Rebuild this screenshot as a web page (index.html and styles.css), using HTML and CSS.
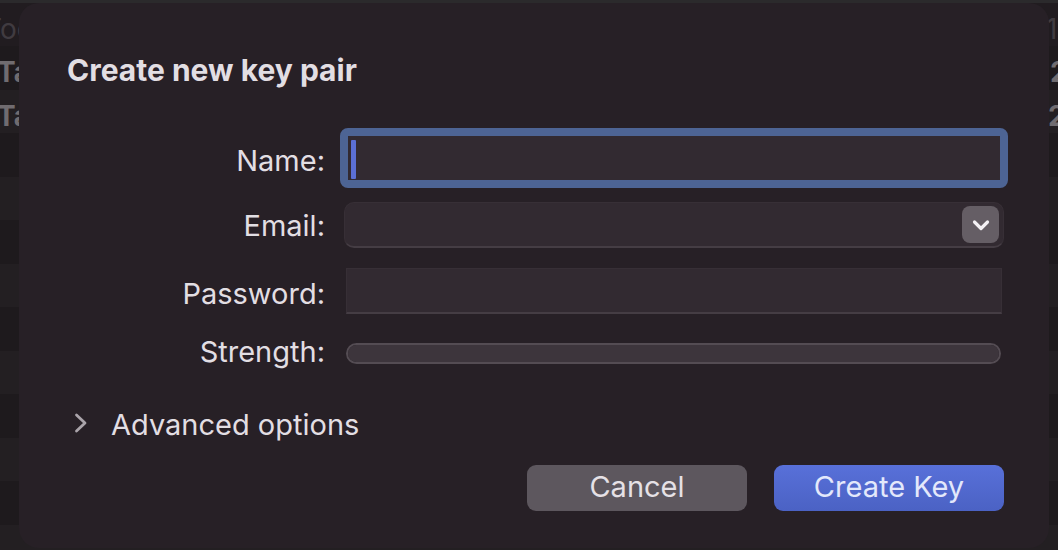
FILE: index.html
```html
<!DOCTYPE html>
<html lang="en">
<head>
<meta charset="utf-8">
<title>Create new key pair</title>
<link rel="stylesheet" href="styles.css">
</head>
<body>
<div class="key-list" aria-hidden="true">
  <div class="toolbar"></div>
  <div class="row heading"><span class="tool">Too</span><span class="date">10</span></div>
  <div class="row"><span class="kind">Ta</span><span class="date narrow">2</span></div>
  <div class="row"><span class="kind">Ta</span><span class="date">2</span></div>
  <div class="row"></div>
  <div class="row"></div>
  <div class="row"></div>
  <div class="row"></div>
  <div class="row"></div>
  <div class="row"></div>
  <div class="row"></div>
  <div class="row"></div>
  <div class="row"></div>
  <div class="row"></div>
</div>
<form class="sheet" role="dialog" aria-labelledby="title">
  <h1 class="title" id="title">Create new key pair</h1>
  <div class="fields">
    <label class="label low" for="name">Name:</label>
    <div class="control focused">
      <input class="input name" id="name" type="text">
      <span class="caret"></span>
    </div>
    <label class="label high" for="email">Email:</label>
    <div class="control combo">
      <input class="input email" id="email" type="text">
      <button class="drop" type="button" aria-label="Show email addresses">
        <svg width="18" height="12" viewBox="0 0 18 12" fill="none" stroke="currentColor" stroke-width="3.200" stroke-linecap="round" stroke-linejoin="round"><path d="M2.500 3 9 9.500l6.500-6.500"/></svg>
      </button>
    </div>
    <label class="label low" for="password">Password:</label>
    <div class="control">
      <input class="input password" id="password" type="password">
    </div>
    <label class="label high" for="strength">Strength:</label>
    <div class="control strength">
      <progress class="meter" id="strength" value="0" max="100"></progress>
    </div>
  </div>
  <button class="disclosure" type="button" aria-expanded="false">
    <svg width="14" height="24" viewBox="0 0 14 24" fill="none" stroke="currentColor" stroke-width="2.800" stroke-linecap="round" stroke-linejoin="round"><path d="M2.500 2 11 10 2.500 18"/></svg>
    <span>Advanced options</span>
  </button>
  <div class="actions">
    <button class="button cancel" type="button">Cancel</button>
    <button class="button primary" type="submit">Create Key</button>
  </div>
</form>
</body>
</html>
```
FILE: styles.css
```css
* { box-sizing: border-box; }

body {
  margin: 0;
  min-height: 100vh;
  overflow: hidden;
  position: relative;
  background: #211d20;
  color: #e2dee3;
  font-family: Inter, "Liberation Sans", sans-serif;
  font-size: 29px;
  line-height: 36px;
}

.key-list {
  position: absolute;
  inset: 0;
  overflow: hidden;
}

.toolbar { height: 3px; background: #2b2a2c; }

.row {
  display: flex;
  justify-content: space-between;
  align-items: center;
  height: 43px;
  padding-top: 8px;
  background: #231f22;
  color: #706c70;
  font-size: 28px;
  font-weight: 700;
  white-space: nowrap;
}

.row:nth-child(odd) { height: 44px; background: #1e1a1d; }
.row.heading { background: #211c20; color: #403b40; font-weight: 400; }
.tool { margin-left: -16px; }
.kind { margin-left: -3px; }
.date { width: 10px; }
.date.narrow { width: 8px; }
.heading .date { width: 12px; }

.sheet {
  position: absolute;
  inset: 3px 9px 2px 19px;
  padding: 49px 45px 0 48px;
  border-radius: 20px;
  background: #272026;
}

.title { margin: 0 0 40px; font-size: 30px; line-height: 36px; font-weight: 700; }

.fields {
  display: grid;
  grid-template-columns: 258px 1fr;
  column-gap: 15px;
  align-items: center;
}

.label { text-align: right; }
.label.low { padding-top: 6px; }
.label.high { padding-bottom: 4px; }

.control { position: relative; padding: 0 2px 0 6px; }
.focused { padding: 0; margin-right: -4px; }
.combo { margin: 14px 0 20px; padding: 0 0 0 4px; }
.strength { display: flex; padding-right: 3px; margin: 29px 0; }

.input {
  display: block;
  width: 100%;
  height: 46px;
  margin: 0;
  padding: 0 12px;
  border: 1px solid #372f36;
  border-bottom: 2px solid #453d44;
  border-radius: 0;
  outline: 0;
  background: #322a31;
  color: inherit;
  font: inherit;
}

.input.name { height: 60px; border: 8px solid #4d6494; border-radius: 8px; }
.input.email { padding-right: 48px; border-radius: 10px; }

.caret {
  position: absolute;
  left: 11px;
  top: 12px;
  width: 5px;
  height: 39px;
  border-radius: 1px;
  background: #5b6fd4;
}

.drop {
  position: absolute;
  top: 4px;
  right: 5px;
  display: grid;
  place-items: center;
  width: 37px;
  height: 37px;
  padding: 0;
  border: 0;
  border-radius: 8px;
  background: #655e65;
  color: #f4f1f5;
}

.meter {
  appearance: none;
  display: block;
  width: 100%;
  height: 21px;
  border: 2px solid #544c53;
  border-radius: 11px;
  background: #3d353c;
  overflow: hidden;
}

.meter::-webkit-progress-bar { background: #3d353c; }
.meter::-webkit-progress-value { background: #5b6fd4; }

.disclosure {
  display: flex;
  align-items: center;
  gap: 23px;
  margin: 14px 0 0 7px;
  padding: 0;
  border: 0;
  background: none;
  color: inherit;
  font: inherit;
}

.disclosure svg { color: #aaa4aa; }

.actions {
  display: flex;
  justify-content: flex-end;
  gap: 27px;
  margin-top: 22px;
}

.button {
  width: 220px;
  height: 46px;
  padding: 0 0 2px;
  border: 0;
  border-radius: 9px;
  background: #5d575e;
  color: #e5e1e6;
  font: inherit;
}

.primary { width: 230px; background: linear-gradient(#5870d9, #4b62c4); color: #e3e8fb; }
```
